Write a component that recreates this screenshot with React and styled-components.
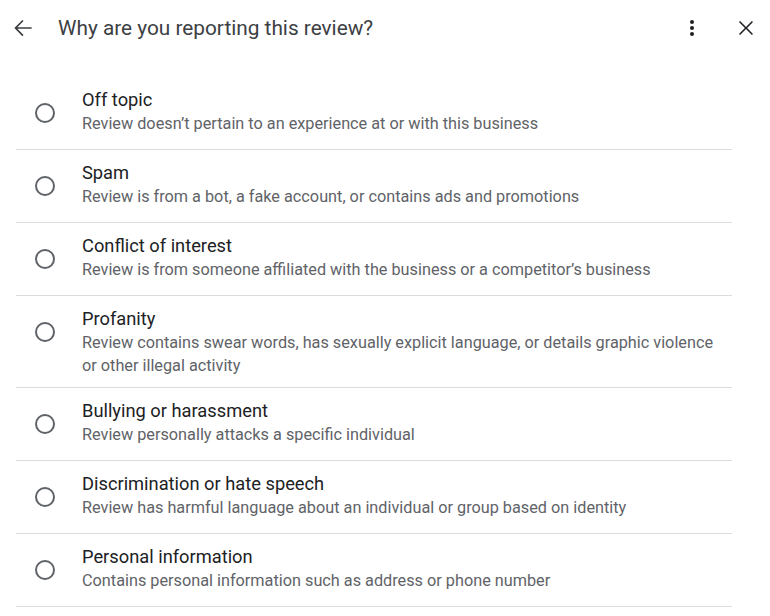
import React, { useState } from "react";
import styled, { createGlobalStyle } from "styled-components";

const GlobalStyle = createGlobalStyle`
  html, body {
    margin: 0;
    padding: 0;
    background: #ffffff;
  }
  body {
    font-family: Roboto, "Noto Sans", Arial, sans-serif;
    -webkit-font-smoothing: antialiased;
  }
`;

const Page = styled.div`
  width: 770px;
  min-height: 616px;
  background: #ffffff;
`;

const Header = styled.header`
  display: flex;
  align-items: center;
  height: 56px;
  padding: 0 12px 0 10px;
`;

const IconButton = styled.button`
  display: flex;
  align-items: center;
  justify-content: center;
  width: ${({ $size }) => $size || 24}px;
  height: ${({ $size }) => $size || 24}px;
  padding: 0;
  border: none;
  background: none;
  color: #3c4043;
  cursor: pointer;
  flex-shrink: 0;
  margin-left: ${({ $gap }) => $gap || 0}px;

  svg {
    display: block;
  }
`;

const Title = styled.h1`
  flex: 1;
  margin: 0 0 0 22px;
  font-size: 20.8px;
  font-weight: 400;
  color: #3c4043;
`;

const List = styled.ul`
  list-style: none;
  margin: 21px 38px 0 16px;
  padding: 0;
`;

const Row = styled.li`
  display: flex;
  align-items: flex-start;
  box-sizing: border-box;
  min-height: 73px;
  padding: 11px 0 10px;
  border-bottom: 1px solid #dadce0;
  cursor: pointer;
`;

const Radio = styled.span`
  box-sizing: border-box;
  width: 20px;
  height: 20px;
  margin: 15px 27px 0 19px;
  border-radius: 50%;
  border: 2px solid ${({ $checked }) => ($checked ? "#1a73e8" : "#5f6368")};
  flex-shrink: 0;
  display: flex;
  align-items: center;
  justify-content: center;

  &::after {
    content: "";
    width: 10px;
    height: 10px;
    border-radius: 50%;
    background: #1a73e8;
    display: ${({ $checked }) => ($checked ? "block" : "none")};
  }
`;

const Text = styled.div`
  display: flex;
  flex-direction: column;
  padding-right: 10px;
`;

const Label = styled.div`
  font-size: 18.3px;
  line-height: 24px;
  color: #202124;
`;

const Description = styled.div`
  font-size: 16.25px;
  line-height: 23px;
  color: #5f6368;
`;

const reasons = [
  {
    id: "off-topic",
    label: "Off topic",
    text: "Review doesn\u2019t pertain to an experience at or with this business",
  },
  {
    id: "spam",
    label: "Spam",
    text: "Review is from a bot, a fake account, or contains ads and promotions",
  },
  {
    id: "conflict",
    label: "Conflict of interest",
    text: "Review is from someone affiliated with the business or a competitor\u2019s business",
  },
  {
    id: "profanity",
    label: "Profanity",
    text: "Review contains swear words, has sexually explicit language, or details graphic violence or other illegal activity",
  },
  {
    id: "bullying",
    label: "Bullying or harassment",
    text: "Review personally attacks a specific individual",
  },
  {
    id: "discrimination",
    label: "Discrimination or hate speech",
    text: "Review has harmful language about an individual or group based on identity",
  },
  {
    id: "personal",
    label: "Personal information",
    text: "Contains personal information such as address or phone number",
  },
];

const BackIcon = () => (
  <svg width="26" height="26" viewBox="0 0 24 24" fill="currentColor">
    <path d="M20 11.2H6.9l5.6-5.6L11.4 4.5 4 12l7.4 7.5 1.1-1.1-5.6-5.6H20z" />
  </svg>
);

const MoreIcon = () => (
  <svg width="24" height="24" viewBox="0 0 24 24" fill="#202124">
    <circle cx="12" cy="6" r="2" />
    <circle cx="12" cy="12" r="2" />
    <circle cx="12" cy="18" r="2" />
  </svg>
);

const CloseIcon = () => (
  <svg width="24" height="24" viewBox="0 0 24 24" fill="#202124">
    <path d="M19 6.1 17.9 5 12 10.9 6.1 5 5 6.1 10.9 12 5 17.9 6.1 19 12 13.1 17.9 19 19 17.9 13.1 12z" />
  </svg>
);

export default function App() {
  const [selected, setSelected] = useState(null);

  return (
    <Page>
      <GlobalStyle />
      <Header>
        <IconButton $size={26} aria-label="Back">
          <BackIcon />
        </IconButton>
        <Title>Why are you reporting this review?</Title>
        <IconButton aria-label="More options">
          <MoreIcon />
        </IconButton>
        <IconButton $gap={30} aria-label="Close">
          <CloseIcon />
        </IconButton>
      </Header>
      <List>
        {reasons.map((r) => (
          <Row key={r.id} onClick={() => setSelected(r.id)}>
            <Radio $checked={selected === r.id} />
            <Text>
              <Label>{r.label}</Label>
              <Description>{r.text}</Description>
            </Text>
          </Row>
        ))}
      </List>
    </Page>
  );
}
